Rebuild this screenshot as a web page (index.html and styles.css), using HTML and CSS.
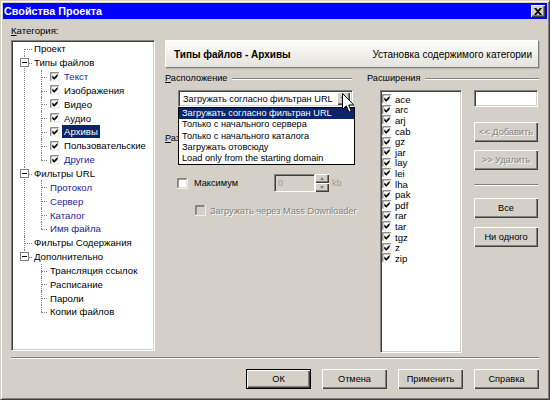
FILE: index.html
```html
<!DOCTYPE html>
<html lang="ru">
<head>
	<meta charset="UTF-8">
	<title>Свойства Проекта</title>
	<link rel="stylesheet" href="styles.css">
</head>
<body>
<!-- общие значки флажков -->
<svg class="defs" width="0" height="0">
	<symbol id="frame" viewBox="0 0 13 13">
		<path d="M0.5 12 V0.5 H12" stroke="#808080" fill="none"/>
		<path d="M0 12.5 H12.5 V0" stroke="#fff" fill="none"/>
		<path d="M1.5 11 V1.5 H11" stroke="#404040" fill="none"/>
		<path d="M1 11.5 H11.5 V1" stroke="#d4d0c8" fill="none"/>
	</symbol>
	<symbol id="chk" viewBox="0 0 13 13">
		<use href="#frame"/>
		<rect x="2" y="2" width="9" height="9" fill="#fff"/>
		<path d="M3 5H4V6H5V7H6V6H7V5H8V4H9V3H10V6H9V7H8V8H7V9H6V10H5V9H4V8H3Z" fill="#000"/>
	</symbol>
	<symbol id="box" viewBox="0 0 13 13">
		<use href="#frame"/>
		<rect x="2" y="2" width="9" height="9" fill="#fff"/>
	</symbol>
	<symbol id="boxoff" viewBox="0 0 13 13">
		<use href="#frame"/>
		<rect x="2" y="2" width="9" height="9" fill="#d4d0c8"/>
	</symbol>
</svg>

<div class="window">
	<div class="titlebar">
		<span>Свойства Проекта</span>
		<span class="close"><svg width="8" height="7" viewBox="0 0 8 7"><path d="M0.5 0 L6.5 7 M1.5 0 L7.5 7 M6.5 0 L0.5 7 M7.5 0 L1.5 7" stroke="#000" stroke-width="1.1"/></svg></span>
	</div>

	<div class="content">
		<div class="cat-label"><u>К</u>атегория:</div>

		<div class="main">
			<div class="tree-box">
				<ul class="tree">
					<li class="first"><div class="row"><span class="t">Проект</span></div></li>
					<li>
						<div class="row"><span class="pm"></span><span class="t">Типы файлов</span></div>
						<ul class="sub">
							<li><div class="row"><svg class="cb"><use href="#chk"/></svg><span class="t link">Текст</span></div></li>
							<li><div class="row"><svg class="cb"><use href="#chk"/></svg><span class="t">Изображения</span></div></li>
							<li><div class="row"><svg class="cb"><use href="#chk"/></svg><span class="t">Видео</span></div></li>
							<li><div class="row"><svg class="cb"><use href="#chk"/></svg><span class="t">Аудио</span></div></li>
							<li><div class="row"><svg class="cb"><use href="#chk"/></svg><span class="t sel">Архивы</span></div></li>
							<li><div class="row"><svg class="cb"><use href="#chk"/></svg><span class="t">Пользовательские</span></div></li>
							<li class="last"><div class="row"><svg class="cb"><use href="#chk"/></svg><span class="t link">Другие</span></div></li>
						</ul>
					</li>
					<li>
						<div class="row"><span class="pm"></span><span class="t">Фильтры URL</span></div>
						<ul class="sub">
							<li class="plain"><div class="row"><span class="t link">Протокол</span></div></li>
							<li class="plain"><div class="row"><span class="t link">Сервер</span></div></li>
							<li class="plain"><div class="row"><span class="t link">Каталог</span></div></li>
							<li class="plain last"><div class="row"><span class="t link">Имя файла</span></div></li>
						</ul>
					</li>
					<li><div class="row"><span class="t">Фильтры Содержания</span></div></li>
					<li class="last">
						<div class="row"><span class="pm"></span><span class="t">Дополнительно</span></div>
						<ul class="sub">
							<li class="plain"><div class="row"><span class="t">Трансляция ссылок</span></div></li>
							<li class="plain"><div class="row"><span class="t">Расписание</span></div></li>
							<li class="plain"><div class="row"><span class="t">Пароли</span></div></li>
							<li class="plain last"><div class="row"><span class="t">Копии файлов</span></div></li>
						</ul>
					</li>
				</ul>
			</div>

			<div class="panel">
				<div class="head">
					<b>Типы файлов - Архивы</b>
					<span>Установка содержимого категории</span>
				</div>

				<div class="cols">
					<div class="col-left">
						<div class="group-label"><span><u>Р</u>асположение</span></div>

						<div class="combo-wrap">
							<div class="combo">
								<span class="combo-text">Загружать согласно фильтран URL</span>
								<span class="arrow-btn"><span class="tri"></span></span>
							</div>
							<ul class="drop">
								<li class="sel">Загружать согласно фильтран URL</li>
								<li>Только с начального сервера</li>
								<li>Только с начального каталога</li>
								<li>Загружать отовсюду</li>
								<li>Load only from the starting domain</li>
							</ul>
							<svg class="cursor" width="13" height="20" viewBox="0 0 13 20"><path d="M0.5 0.5 V16.5 L4.3 12.8 L7 19.2 L9.3 18.2 L6.7 12 H11.8 Z" fill="#fff" stroke="#000"/></svg>
						</div>

						<div class="group-label size-label"><span><u>Р</u>азмер</span></div>

						<div class="max-row">
							<svg class="cb big"><use href="#box"/></svg>
							<span class="max-label">Максимум</span>
							<span class="spin-in">0</span>
							<span class="spin-btns"><span class="sb"><span class="tri-up"></span></span><span class="sb"><span class="tri-dn"></span></span></span>
							<span class="kb">kb</span>
						</div>

						<div class="dl-row">
							<svg class="cb big"><use href="#boxoff"/></svg>
							<span class="off">Загружать через Mass Downloader</span>
						</div>
					</div>

					<div class="col-right">
						<div class="group-label"><span>Расширения</span></div>
						<div class="ext">
							<ul class="listbox">
								<li><svg class="cb"><use href="#chk"/></svg>ace</li>
								<li><svg class="cb"><use href="#chk"/></svg>arc</li>
								<li><svg class="cb"><use href="#chk"/></svg>arj</li>
								<li><svg class="cb"><use href="#chk"/></svg>cab</li>
								<li><svg class="cb"><use href="#chk"/></svg>gz</li>
								<li><svg class="cb"><use href="#chk"/></svg>jar</li>
								<li><svg class="cb"><use href="#chk"/></svg>lay</li>
								<li><svg class="cb"><use href="#chk"/></svg>lei</li>
								<li><svg class="cb"><use href="#chk"/></svg>lha</li>
								<li><svg class="cb"><use href="#chk"/></svg>pak</li>
								<li><svg class="cb"><use href="#chk"/></svg>pdf</li>
								<li><svg class="cb"><use href="#chk"/></svg>rar</li>
								<li><svg class="cb"><use href="#chk"/></svg>tar</li>
								<li><svg class="cb"><use href="#chk"/></svg>tgz</li>
								<li><svg class="cb"><use href="#chk"/></svg>z</li>
								<li><svg class="cb"><use href="#chk"/></svg>zip</li>
							</ul>
							<div class="controls">
								<div class="txt"></div>
								<div class="btn disabled add">&lt;&lt; Добавить</div>
								<div class="btn disabled del">&gt;&gt; Удалить</div>
								<div class="sep-h"></div>
								<div class="btn all">Все</div>
								<div class="btn none">Ни одного</div>
							</div>
						</div>
					</div>
				</div>
			</div>
		</div>

		<div class="sep-bottom"></div>

		<div class="btn-row">
			<div class="btn default">ОК</div>
			<div class="btn">Отмена</div>
			<div class="btn">Применить</div>
			<div class="btn">Справка</div>
		</div>
	</div>
</div>
</body>
</html>
```

FILE: styles.css
```css
body{margin:0;font-family:"Liberation Sans",Arial,sans-serif;font-size:9.2px;color:#000;background:#d4d0c8;}
ul,li{margin:0;padding:0;list-style:none;}
.defs{position:absolute;width:0;height:0;}

/* окно */
.window{width:550px;height:400px;box-sizing:border-box;background:#d4d0c8;border:1px solid;border-color:#d4d0c8 #404040 #404040 #d4d0c8;box-shadow:inset 1px 1px #fff,inset -1px -1px #808080;padding:2px;}
.titlebar{height:16px;background:#0000ff;color:#fff;font-weight:bold;font-size:10.8px;display:flex;align-items:center;justify-content:space-between;padding:0 2px 0 1px;}
.close{width:14px;height:12px;box-sizing:border-box;background:#d4d0c8;box-shadow:inset 1px 1px #fff,inset -1px -1px #404040,inset -2px -2px #808080;display:flex;align-items:center;justify-content:center;}
.close svg{display:block;}

.content{padding:6px 8px 0 8px;}
.cat-label{height:12px;line-height:12px;margin-bottom:3px;font-size:9.6px;}
.main{display:flex;align-items:flex-start;gap:10px;height:313px;}

/* дерево */
.tree-box{width:144px;height:311px;box-sizing:border-box;background:#fff;border:1px solid;border-color:#808080 #fff #fff #808080;box-shadow:inset 1px 1px #404040,inset -1px -1px #d4d0c8;padding:1px;overflow:hidden;}
.tree{font-size:9.6px;}
.tree li{position:relative;}
.tree li::before{content:'';position:absolute;top:0;bottom:0;border-left:1px dotted #808080;}
.tree li::after{content:'';position:absolute;top:7px;border-top:1px dotted #808080;}
.tree li.first::before{top:7px;}
.tree li.last::before{bottom:auto;height:7px;}
.tree > li{padding-left:19px;}
.tree > li::before,.tree > li::after{left:11px;}
.tree > li::after{width:8px;}
.sub > li{padding-left:18px;}
.sub > li.plain{padding-left:16px;}
.sub > li::before,.sub > li::after{left:9px;}
.sub > li::after{width:6px;}
.row{height:13.85px;display:flex;align-items:center;}
.t{padding:0 2px;line-height:13px;white-space:nowrap;}
.t.sel{background:#0a246a;color:#fff;}
.link{color:#1e1e96;}
.pm{position:absolute;left:7px;top:2px;width:9px;height:9px;box-sizing:border-box;border:1px solid #808080;background:#fff;z-index:1;}
.pm::before{content:'';position:absolute;left:1px;top:3px;width:5px;height:1px;background:#000;}
.cb{width:10px;height:10px;margin-right:2px;flex:none;display:block;}
.cb.big{width:11px;height:11px;}

/* правая часть */
.panel{width:374px;}
.head{height:28px;box-sizing:border-box;display:flex;align-items:center;justify-content:space-between;padding:0 6px 0 8px;border:1px solid;border-color:#fff #808080 #808080 #fff;box-shadow:1px 1px #b8b4ac;background:linear-gradient(#fdfdfc,#e4e2dc);font-size:10px;}
.cols{display:grid;grid-template-columns:190px 172px;column-gap:12px;margin-top:5px;}
.group-label{display:flex;align-items:center;height:11px;line-height:11px;white-space:nowrap;}
.group-label::after{content:'';flex:1;margin-left:5px;border-top:1px solid #808080;border-bottom:1px solid #fff;}
.col-left .group-label{margin-right:3px;}

.combo-wrap{position:relative;margin:6px 0 0 13px;width:175px;}
.combo{height:17px;box-sizing:border-box;border:1px solid;border-color:#808080 #fff #fff #808080;box-shadow:inset 1px 1px #404040,inset -1px -1px #d4d0c8;background:#fff;display:flex;align-items:center;padding:2px;}
.combo-text{flex:1;padding-left:2px;white-space:nowrap;overflow:hidden;}
.arrow-btn{width:13px;height:13px;box-sizing:border-box;background:#d4d0c8;box-shadow:inset 1px 1px #fff,inset -1px -1px #404040,inset -2px -2px #808080;display:flex;align-items:center;justify-content:center;}
.tri{width:0;height:0;border-left:3.5px solid transparent;border-right:3.5px solid transparent;border-top:4px solid #000;}
.drop{position:absolute;top:17px;left:0;width:177px;box-sizing:border-box;border:1px solid #000;background:#fff;z-index:5;}
.drop li{height:11.3px;line-height:11.3px;padding-left:3px;white-space:nowrap;}
.drop li.sel{background:#0a246a;color:#fff;}
.cursor{position:absolute;left:164px;top:3px;z-index:10;}

.size-label{margin-top:26px;}
.max-row{display:flex;align-items:center;height:18px;margin-top:30px;padding-left:12px;}
.max-label{width:80px;margin-left:4px;}
.spin-in{width:41px;height:18px;box-sizing:border-box;border:1px solid;border-color:#808080 #fff #fff #808080;box-shadow:inset 1px 1px #404040,inset -1px -1px #d4d0c8;background:#d4d0c8;color:#a09c94;padding:2px 3px;line-height:13px;}
.spin-btns{display:flex;flex-direction:column;width:14px;height:18px;}
.sb{flex:1;background:#d4d0c8;box-shadow:inset 1px 1px #fff,inset -1px -1px #404040,inset -2px -2px #808080;display:flex;align-items:center;justify-content:center;}
.tri-up,.tri-dn{width:0;height:0;border-left:2.5px solid transparent;border-right:2.5px solid transparent;}
.tri-up{border-bottom:3px solid #808080;}
.tri-dn{border-top:3px solid #808080;}
.kb{margin-left:3px;color:#a09c94;}
.dl-row{display:flex;align-items:center;height:11px;margin-top:13px;padding-left:30px;}
.dl-row .cb{margin-right:4px;}
.off{color:#808080;text-shadow:1px 1px #fff;white-space:nowrap;}

.ext{display:flex;margin-top:6px;padding-left:13px;gap:12px;}
.listbox{width:82px;height:263px;box-sizing:border-box;background:#fff;border:1px solid;border-color:#808080 #fff #fff #808080;box-shadow:inset 1px 1px #404040,inset -1px -1px #d4d0c8;padding:3px 1px 1px;font-size:9.6px;}
.listbox li{height:10.6px;display:flex;align-items:center;}
.listbox .cb{margin-right:3px;}
.controls{width:64px;display:flex;flex-direction:column;}
.txt{height:17px;box-sizing:border-box;background:#fff;border:1px solid;border-color:#808080 #fff #fff #808080;box-shadow:inset 1px 1px #404040,inset -1px -1px #d4d0c8;}
.btn{height:20px;box-sizing:border-box;background:#d4d0c8;box-shadow:inset 1px 1px #fff,inset -1px -1px #404040,inset -2px -2px #808080;display:flex;align-items:center;justify-content:center;white-space:nowrap;}
.btn.disabled{color:#808080;text-shadow:1px 1px #fff;}
.btn.add{margin-top:15px;}
.btn.del{margin-top:8px;}
.sep-h{margin-top:14px;border-top:1px solid #808080;border-bottom:1px solid #fff;}
.btn.all{margin-top:12px;}
.btn.none{margin-top:9px;}

/* нижние кнопки */
.sep-bottom{margin-top:4px;border-top:1px solid #808080;border-bottom:1px solid #fff;}
.btn-row{display:flex;justify-content:flex-end;gap:11px;margin-top:10px;}
.btn-row .btn{width:65px;}
.btn.default{border:1px solid #000;}
```
